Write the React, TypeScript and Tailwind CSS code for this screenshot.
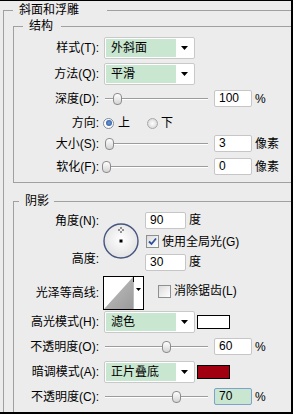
import React from "react";

function Label({ children }: { children: React.ReactNode }) {
  return (
    <div className="w-[85px] shrink-0 text-right leading-[16px] whitespace-nowrap">
      {children}
    </div>
  );
}

function Select({ value }: { value: string }) {
  return (
    <div className="ml-[5px] w-[91px] h-[22px] shrink-0 bg-white border border-[#c9c9c9] rounded-[2px] flex p-[1px]">
      <div className="flex-1 bg-[#c8e6d0] flex items-center pl-[5px] whitespace-nowrap overflow-hidden">
        {value}
      </div>
      <div className="w-[17px] flex items-center justify-center">
        <svg width="7" height="4" viewBox="0 0 7 4">
          <path d="M0 0H7L3.5 4Z" fill="#000" />
        </svg>
      </div>
    </div>
  );
}

function Slider({ pos }: { pos: number }) {
  return (
    <div className="ml-[3px] w-[106px] h-full shrink-0 relative">
      <div className="absolute left-[3px] right-0 top-1/2 -mt-[1px] h-[2px] border-t border-[#9c9c9c] border-b border-b-white" />
      <div
        className="absolute top-1/2 -mt-[6px] w-[9px] h-[12px] rounded-[4px] border border-[#8c8c8c] bg-linear-to-b from-white to-[#d4d4d4]"
        style={{ left: pos }}
      />
    </div>
  );
}

function Field({ value, focus }: { value: string; focus?: boolean }) {
  return (
    <div
      className={
        focus
          ? "ml-[6px] w-[38px] h-[17px] shrink-0 bg-[#c8e6d0] border border-[#7da2ce] rounded-[2px] pl-[4px] leading-[15px]"
          : "ml-[6px] w-[38px] h-[17px] shrink-0 bg-white border border-[#c6c6c6] rounded-[2px] pl-[4px] leading-[15px]"
      }
    >
      {value}
    </div>
  );
}

function Check({ checked }: { checked?: boolean }) {
  return (
    <div className="w-[13px] h-[13px] shrink-0 border border-[#8e8f8f] bg-linear-to-br from-[#dcdcdc] to-white flex items-center justify-center">
      {checked && (
        <svg width="9" height="9" viewBox="0 0 9 9">
          <path d="M1 4.5L3.5 7L8 1.5" stroke="#2b4f9a" strokeWidth="1.8" fill="none" />
        </svg>
      )}
    </div>
  );
}

function Dial() {
  return (
    <svg width="36" height="36" viewBox="0 0 36 36" className="shrink-0">
      <defs>
        <radialGradient id="dg" cx="50%" cy="45%" r="55%">
          <stop offset="0%" stopColor="#ffffff" />
          <stop offset="100%" stopColor="#e2e2e2" />
        </radialGradient>
      </defs>
      <circle cx="18" cy="18" r="17" fill="url(#dg)" stroke="#46557f" strokeWidth="1.4" />
      <path d="M18 4v2M18 8v2M15 7h2M19 7h2" stroke="#333" strokeWidth="1" />
      <rect x="16.5" y="16.5" width="3" height="3" fill="#000" />
    </svg>
  );
}

function Contour() {
  return (
    <svg width="41" height="34" viewBox="0 0 41 34" className="ml-[4px] shrink-0">
      <defs>
        <linearGradient id="cg" x1="0" y1="0" x2="1" y2="1">
          <stop offset="0%" stopColor="#c4c4c4" />
          <stop offset="100%" stopColor="#9a9a9a" />
        </linearGradient>
      </defs>
      <rect x="0.5" y="0.5" width="40" height="33" fill="#fff" stroke="#000" />
      <polygon points="1,33 30,1 30,33" fill="url(#cg)" />
      <line x1="30.5" y1="1" x2="30.5" y2="33" stroke="#bdbdbd" />
      <line x1="30.5" y1="1" x2="30.5" y2="6" stroke="#000" />
      <path d="M33 12H38L35.5 15Z" fill="#000" />
    </svg>
  );
}

export default function App() {
  return (
    <div className="w-[293px] h-[414px] overflow-hidden bg-[#ececec] border-t border-r-2 border-b-2 border-black text-[12px] text-black font-['Liberation_Sans','Noto_Sans_CJK_SC',sans-serif]">
      <fieldset className="ml-[3px] mt-[1px] w-[330px] h-[460px] border border-[#a0a0a0]">
        <legend className="ml-[9px] pl-[6px] pr-[28px] leading-[16px]">斜面和浮雕</legend>

        {/* 结构 */}
        <fieldset className="ml-[9px] w-[310px] border border-[#a0a0a0] pb-[7px]">
          <legend className="ml-[9px] pl-[6px] pr-[8px] leading-[16px]">结构</legend>

          <div className="mt-[3px] h-[22px] flex items-center">
            <Label>样式(T):</Label>
            <Select value="外斜面" />
          </div>
          <div className="mt-[4px] h-[22px] flex items-center">
            <Label>方法(Q):</Label>
            <Select value="平滑" />
          </div>
          <div className="mt-[5px] h-[17px] flex items-center">
            <Label>深度(D):</Label>
            <Slider pos={11} />
            <Field value="100" />
            <span className="ml-[3px]">%</span>
          </div>
          <div className="mt-[8px] h-[16px] flex items-center">
            <Label>方向:</Label>
            <div className="ml-[4px] w-[11px] h-[11px] rounded-full border border-[#7f8b99] bg-white flex items-center justify-center">
              <div className="w-[6px] h-[6px] rounded-full bg-radial from-[#6f9ad8] to-[#1f4f99]" />
            </div>
            <span className="ml-[4px]">上</span>
            <div className="ml-[17px] w-[11px] h-[11px] rounded-full border border-[#a8a8a8] bg-radial from-white to-[#cfcfcf]" />
            <span className="ml-[3px]">下</span>
          </div>
          <div className="mt-[4px] h-[17px] flex items-center">
            <Label>大小(S):</Label>
            <Slider pos={3} />
            <Field value="3" />
            <span className="ml-[3px]">像素</span>
          </div>
          <div className="mt-[6px] h-[17px] flex items-center">
            <Label>软化(F):</Label>
            <Slider pos={0} />
            <Field value="0" />
            <span className="ml-[3px]">像素</span>
          </div>
        </fieldset>

        {/* 阴影 */}
        <fieldset className="ml-[9px] mt-[10px] w-[310px] h-[260px] border border-[#a0a0a0]">
          <legend className="ml-[5px] pl-[6px] pr-[5px] leading-[16px]">阴影</legend>

          <div className="h-[60px] flex">
            <div className="flex flex-col">
              <div className="mt-[4px]">
                <Label>角度(N):</Label>
              </div>
              <div className="mt-[22px]">
                <Label>高度:</Label>
              </div>
            </div>
            <div className="ml-[4px] mt-[14px]">
              <Dial />
            </div>
            <div className="ml-[6px] flex flex-col">
              <div className="mt-[2px] flex items-center">
                <div className="w-[41px] h-[17px] bg-white border border-[#c6c6c6] rounded-[2px] pl-[4px] leading-[15px]">90</div>
                <span className="ml-[3px]">度</span>
              </div>
              <div className="mt-[6px] h-[13px] flex items-center">
                <div className="ml-[1px]">
                  <Check checked />
                </div>
                <span className="ml-[3px] whitespace-nowrap">使用全局光(G)</span>
              </div>
              <div className="mt-[5px] flex items-center">
                <div className="w-[41px] h-[17px] bg-white border border-[#c6c6c6] rounded-[2px] pl-[4px] leading-[15px]">30</div>
                <span className="ml-[3px]">度</span>
              </div>
            </div>
          </div>

          <div className="mt-[7px] h-[34px] flex items-center">
            <Label>光泽等高线:</Label>
            <Contour />
            <div className="ml-[14px] -mt-[4px]">
              <Check />
            </div>
            <span className="ml-[3px] -mt-[4px] whitespace-nowrap">消除锯齿(L)</span>
          </div>

          <div className="mt-[1px] h-[22px] flex items-center">
            <Label>高光模式(H):</Label>
            <Select value="滤色" />
            <div className="ml-[2px] w-[33px] h-[14px] border border-black bg-white" />
          </div>
          <div className="mt-[5px] h-[17px] flex items-center">
            <Label>不透明度(O):</Label>
            <Slider pos={60} />
            <Field value="60" />
            <span className="ml-[3px]">%</span>
          </div>
          <div className="mt-[6px] h-[22px] flex items-center">
            <Label>暗调模式(A):</Label>
            <Select value="正片叠底" />
            <div className="ml-[2px] w-[33px] h-[14px] border border-black bg-[#a00010]" />
          </div>
          <div className="mt-[5px] h-[17px] flex items-center">
            <Label>不透明度(C):</Label>
            <Slider pos={70} />
            <Field value="70" focus />
            <span className="ml-[3px]">%</span>
          </div>
        </fieldset>
      </fieldset>
    </div>
  );
}
